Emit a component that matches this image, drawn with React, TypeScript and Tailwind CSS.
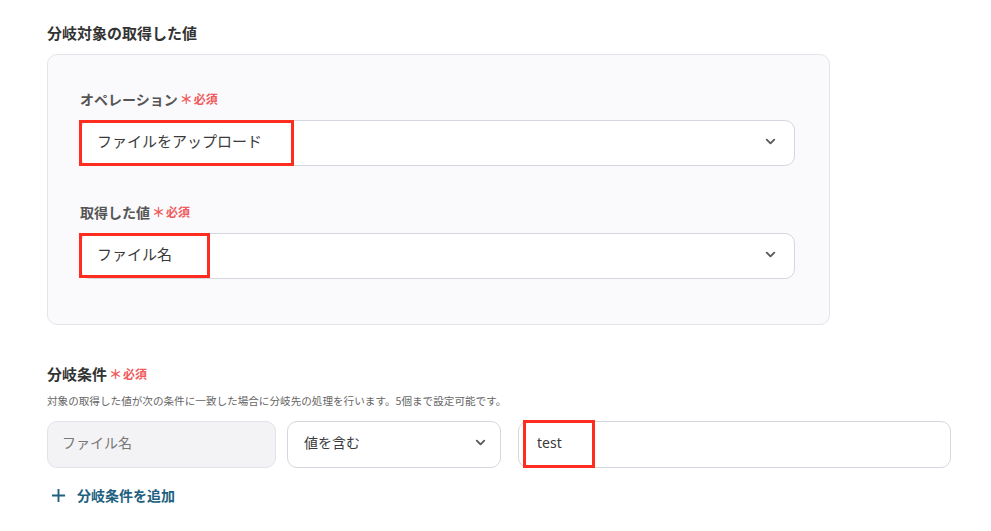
import React from "react";

const font = { fontFamily: '"Noto Sans CJK JP", "Noto Sans", sans-serif' };

const Chevron: React.FC = () => (
  <svg width="15" height="15" viewBox="0 0 24 24" fill="none" stroke="#5a5a5a" strokeWidth="3" strokeLinecap="round" strokeLinejoin="round">
    <path d="M6 9l6 6 6-6" />
  </svg>
);

const Required: React.FC = () => (
  <span className="ml-[2px] flex items-center text-[12px] font-bold text-[#f05a5a]">
    <span className="text-[13px] mr-[1px]">＊</span>必須
  </span>
);

interface FieldProps {
  label: string;
  value: string;
  markWidth: number;
  markHeight: number;
}

// select with the red highlight frame drawn over it
const Field: React.FC<FieldProps> = ({ label, value, markWidth, markHeight }) => (
  <div className="flex flex-col gap-[11px]">
    <div className="text-[14px] leading-[20px] font-bold text-[#555] flex items-center">
      {label}
      <Required />
    </div>
    <div className="relative h-[46px] rounded-[10px] border border-[#d6d6de] bg-white flex items-center justify-between px-[16px] pb-[4px]">
      <span className="text-[15px] text-[#3a3a3a]">{value}</span>
      <Chevron />
      <div
        className="absolute left-[-2px] top-[-1px] border-[3px] border-[#ff2d1f]"
        style={{ width: markWidth, height: markHeight }}
      />
    </div>
  </div>
);

export default function App() {
  return (
    <div className="w-[991px] h-[531px] bg-white pl-[47px] pt-[23px] flex flex-col" style={font}>
      <div className="text-[15px] leading-[20px] font-bold text-[#333]">分岐対象の取得した値</div>

      <div className="mt-[11px] w-[783px] h-[271px] rounded-[10px] border border-[#e6e4ea] bg-[#faf9fc] pl-[32px] pr-[34px] pt-[34px] flex flex-col gap-[36px]">
        <Field label="オペレーション" value="ファイルをアップロード" markWidth={215} markHeight={46} />
        <Field label="取得した値" value="ファイル名" markWidth={131} markHeight={45} />
      </div>

      <div className="mt-[39px] text-[15px] leading-[20px] font-bold text-[#333] flex items-center">
        分岐条件<Required />
      </div>
      <div className="mt-[9px] text-[10.6px] leading-[16px] text-[#666]">
        対象の取得した値が次の条件に一致した場合に分岐先の処理を行います。5個まで設定可能です。
      </div>

      <div className="mt-[12px] flex items-center gap-[11px]">
        <div className="w-[229px] h-[47px] rounded-[10px] border border-[#e4e2e8] bg-[#f3f2f5] flex items-center pl-[14px] pb-[4px] text-[14px] text-[#777]">
          ファイル名
        </div>
        <div className="w-[214px] h-[47px] rounded-[10px] border border-[#d6d6de] bg-white flex items-center justify-between pl-[16px] pr-[12px] pb-[4px]">
          <span className="text-[14px] text-[#3a3a3a]">値を含む</span>
          <Chevron />
        </div>
        <div className="relative ml-[6px] w-[433px] h-[47px] rounded-[10px] border border-[#d6d6de] bg-white flex items-center pl-[18px] pb-[4px]">
          <span className="text-[14px] text-[#3a3a3a]" style={{ fontFamily: '"Noto Sans", sans-serif' }}>test</span>
          <div className="absolute left-[4px] top-[-2px] w-[72px] h-[48px] border-[3px] border-[#ff2d1f]" />
        </div>
      </div>

      <div className="mt-[17px] flex items-center gap-[11px] pl-[4px] text-[#20607e] text-[14px] leading-[20px] font-bold">
        <svg width="15" height="15" viewBox="0 0 16 16" stroke="#20607e" strokeWidth="2">
          <path d="M8 1v14M1 8h14" />
        </svg>
        分岐条件を追加
      </div>
    </div>
  );
}
